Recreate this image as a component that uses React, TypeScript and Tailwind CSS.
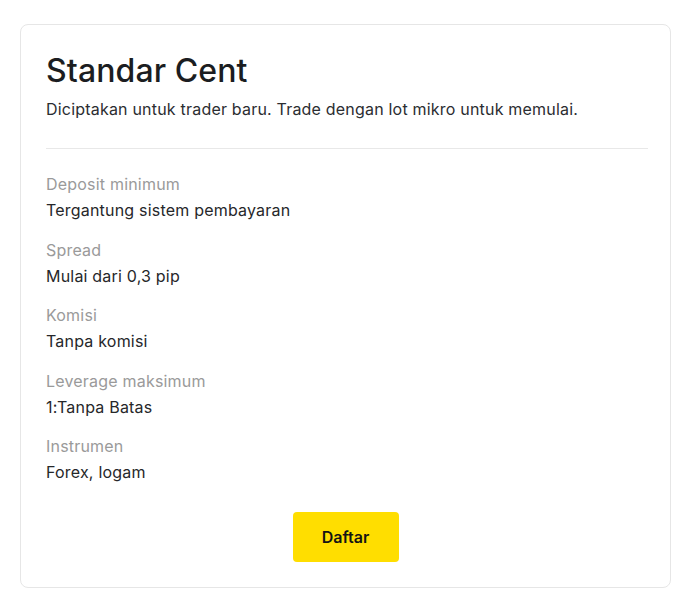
const specs = [
  { label: 'Deposit minimum', value: 'Tergantung sistem pembayaran' },
  { label: 'Spread', value: 'Mulai dari 0,3 pip' },
  { label: 'Komisi', value: 'Tanpa komisi' },
  { label: 'Leverage maksimum', value: '1:Tanpa Batas' },
  { label: 'Instrumen', value: 'Forex, logam' },
];

export default function App() {
  return (
    <div className="min-h-screen bg-white pt-6 pl-5 pr-6 font-['Inter',sans-serif]">
      <div className="w-[651px] rounded-lg border border-[#e6e6e6] bg-white px-[25px] pt-[26px] pb-[25px]">
        <h1 className="text-[32px] leading-10 font-medium text-[#1b1d21] tracking-[0.1px]">Standar Cent</h1>
        <p className="mt-[6px] text-base leading-6 tracking-[0.2px] text-[#2b2d31]">
          Diciptakan untuk trader baru. Trade dengan lot mikro untuk memulai.
        </p>
        <div className="mt-[27px] h-px w-[602px] bg-[#e8e8e8]" />
        <div className="mt-[23px] flex flex-col gap-[15.5px]">
          {specs.map((s) => (
            <div key={s.label} className="flex flex-col gap-[2px]">
              <span className="text-base leading-6 tracking-[0.2px] text-[#9a9a9a]">{s.label}</span>
              <span className="text-base leading-6 tracking-[0.2px] text-[#26272a]">{s.value}</span>
            </div>
          ))}
        </div>
        <div className="mt-7 flex justify-center">
          <button className="h-[50px] w-[106px] rounded bg-[#ffde00] text-base font-semibold text-[#141414]">
            Daftar
          </button>
        </div>
      </div>
    </div>
  );
}
